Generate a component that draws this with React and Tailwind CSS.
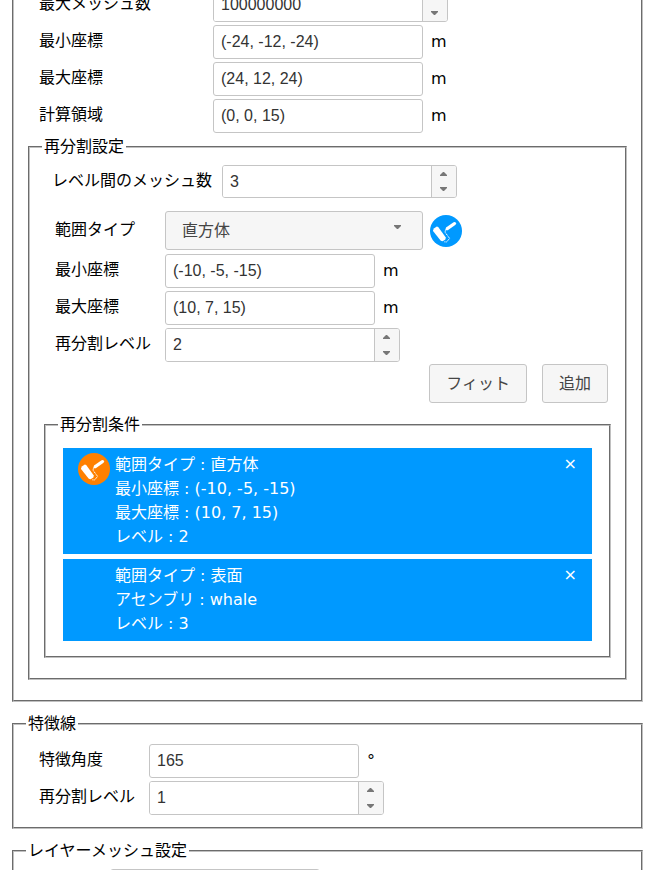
import React, { useId } from 'react';

const inputStyle = "min-w-0 bg-white px-[7px] font-['Liberation_Sans',sans-serif] text-base text-[#333333] outline-none";

const Triangle = ({ up }) => (
  <svg width="7" height="4" viewBox="0 0 7 4" fill="#777777" aria-hidden="true">
    <path d={up ? 'M0 4 V3 L3 0 H4 L7 3 V4 Z' : 'M0 0 V1 L3 4 H4 L7 1 V0 Z'} />
  </svg>
);

const RollerIcon = ({ color }) => (
  <svg width="32" height="32" viewBox="0 0 32 32" className="shrink-0" aria-hidden="true">
    <circle cx="16" cy="16" r="16" fill={color} />
    <path d="M3 15.2 L4.2 13.2 L6.8 11.6 L8.2 12 L15.8 22.4 L15.4 24.4 L12.6 26.2 L10.8 25.8 L3.4 16.6 Z" fill="#ffffff" />
    <path d="M15.2 15.2 L16 12.6 L23.6 7.2 Q25.6 6.6 26 8.2 Q26.2 9.2 25.2 10 L17.8 15.2 Z" fill="#ffffff" />
    <path d="M15.4 15.4 L15 17.2 L19.6 23.4 L16.6 27 L14.2 26.8" stroke="#ffffff" strokeWidth="1" strokeDasharray="1.4 0.6" fill="none" />
  </svg>
);

const Group = ({ title, className, children }) => (
  <fieldset className={`min-w-0 border-2 border-[#c0c0c0] px-3 [border-style:groove] ${className}`}>
    <legend className="px-0.5">{title}</legend>
    {children}
  </fieldset>
);

const TextField = ({ label, value, unit, labelWidth, ...rest }) => {
  const id = useId();
  return (
    <div className="flex h-[34px]">
      <label htmlFor={id} className={`shrink-0 pt-1 ${labelWidth}`}>{label}</label>
      <input id={id} type="text" defaultValue={value} className={`w-[210px] rounded-[3px] border border-[#c5c5c5] ${inputStyle}`} {...rest} />
      {unit && <span className="ml-2 pt-[5px]">{unit}</span>}
    </div>
  );
};

const SpinnerField = ({ label, value, labelWidth, height = 'h-[34px]' }) => {
  const id = useId();
  return (
    <div className={`flex ${height}`}>
      <label htmlFor={id} className={`shrink-0 pt-1 ${labelWidth}`}>{label}</label>
      <div className="flex w-[235px] overflow-hidden rounded-[3px] border border-[#c5c5c5]">
        <input id={id} type="text" inputMode="numeric" defaultValue={value} className={`flex-1 ${inputStyle}`} />
        <div className="flex w-[25px] flex-col border-l border-[#c5c5c5] bg-[#f6f6f6] pr-0.5">
          <button type="button" aria-label="増やす" className="flex flex-1 items-center justify-center"><Triangle up /></button>
          <button type="button" aria-label="減らす" className="flex flex-1 items-center justify-center"><Triangle /></button>
        </div>
      </div>
    </div>
  );
};

const Button = ({ children }) => (
  <button type="button" className="h-[39px] rounded-[3px] border border-[#c5c5c5] bg-[#f6f6f6] px-4 text-[#454545]">{children}</button>
);

const Condition = ({ lines, marked }) => (
  <li className="flex bg-[#0099ff] px-[15px] py-[5px] text-white">
    <div className="mr-[5px] w-8 shrink-0">{marked && <RollerIcon color="#ff8000" />}</div>
    <div className="flex-1">
      {lines.map((line) => <p key={line}>{line}</p>)}
    </div>
    <button type="button" aria-label="削除" className="h-[22px] leading-[22px]">×</button>
  </li>
);

const App = () => (
  <main className="h-screen overflow-hidden bg-white px-3 font-['DejaVu_Sans','Noto_Sans_CJK_JP',sans-serif] text-base leading-6 text-black">
    <section className="-mt-3 mb-2.5 border-2 border-[#c0c0c0] px-3 pb-5 [border-style:groove] [border-top-style:none]">
      <div className="ml-[13px] space-y-[3px]">
        <SpinnerField label="最大メッシュ数" value="100000000" labelWidth="w-[174px]" />
        <TextField label="最小座標" value="(-24, -12, -24)" unit="m" labelWidth="w-[174px]" />
        <TextField label="最大座標" value="(24, 12, 24)" unit="m" labelWidth="w-[174px]" />
        <TextField label="計算領域" value="(0, 0, 15)" unit="m" labelWidth="w-[174px]" />
      </div>

      <Group title="再分割設定" className="mx-0.5 mt-0.5 pb-5">
        <div className="mt-1.5 ml-2.5">
          <SpinnerField label="レベル間のメッシュ数" value="3" labelWidth="w-[170px]" height="h-[33px]" />
        </div>

        <div className="mt-[13px] ml-[13px]">
          <div className="mb-1 flex h-[39px]">
            <label htmlFor="range-type" className="w-[110px] shrink-0 pt-[7px]">範囲タイプ</label>
            <div className="relative w-[258px]">
              <select id="range-type" className="h-full w-full appearance-none rounded-[3px] border border-[#c5c5c5] bg-[#f6f6f6] px-4 text-[#454545]">
                <option>直方体</option>
                <option>表面</option>
              </select>
              <span className="pointer-events-none absolute top-3.5 right-[22px] flex"><Triangle /></span>
            </div>
            <button type="button" aria-label="表示色" className="ml-[7px] self-center"><RollerIcon color="#0099ff" /></button>
          </div>
          <div className="space-y-[3px]">
            <TextField label="最小座標" value="(-10, -5, -15)" unit="m" labelWidth="w-[110px]" />
            <TextField label="最大座標" value="(10, 7, 15)" unit="m" labelWidth="w-[110px]" />
            <SpinnerField label="再分割レベル" value="2" labelWidth="w-[110px]" />
          </div>
        </div>

        <div className="mt-0.5 mr-[5px] mb-2.5 flex justify-end gap-[15px]">
          <Button>フィット</Button>
          <Button>追加</Button>
        </div>

        <Group title="再分割条件" className="mx-0.5 pb-[15px]">
          <ul className="mx-[5px] mt-[11px] space-y-[5px]">
            <Condition marked lines={['範囲タイプ : 直方体', '最小座標 : (-10, -5, -15)', '最大座標 : (10, 7, 15)', 'レベル : 2']} />
            <Condition lines={['範囲タイプ : 表面', 'アセンブリ : whale', 'レベル : 3']} />
          </ul>
        </Group>
      </Group>
    </section>

    <Group title="特徴線" className="mb-2.5 pb-3">
      <div className="mt-2 ml-[13px] space-y-[3px]">
        <TextField label="特徴角度" value="165" unit="°" labelWidth="w-[110px]" />
        <SpinnerField label="再分割レベル" value="1" labelWidth="w-[110px]" />
      </div>
    </Group>

    <Group title="レイヤーメッシュ設定" className="pb-3">
      <div className="mt-1.5 ml-[13px]">
        <TextField aria-label="レイヤー" value="" labelWidth="w-[71px]" />
      </div>
    </Group>
  </main>
);

export default App;
